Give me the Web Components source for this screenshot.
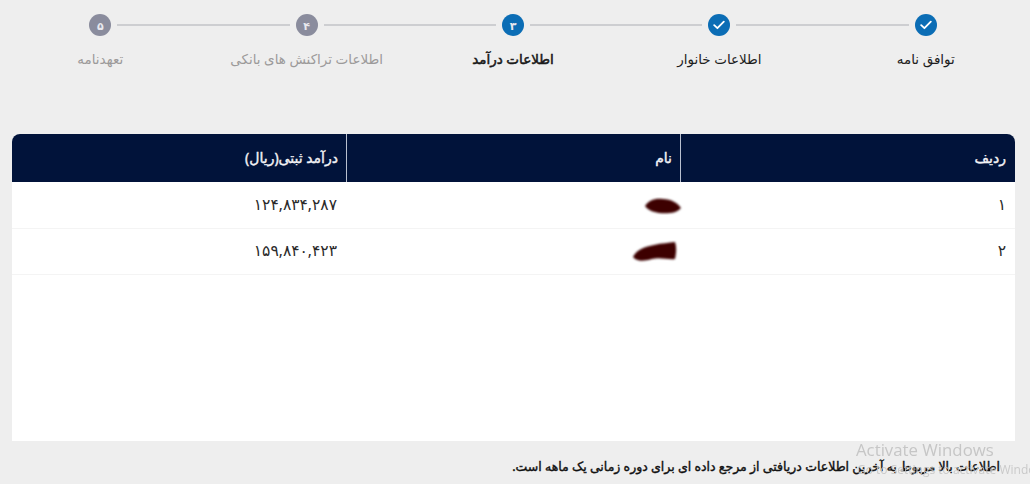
<!DOCTYPE html>
<html lang="fa" dir="rtl">
<head>
<meta charset="utf-8">
<title>اطلاعات درآمد</title>
<style>
    html, body { margin: 0; height: 100%; }
    body {
        background: #eeeeee;
        font-family: "Noto Sans", "DejaVu Sans", sans-serif;
        overflow: hidden;
    }
</style>
</head>
<body>
<step-bar>
    <step-item state="done" label="توافق نامه" first></step-item>
    <step-item state="done" label="اطلاعات خانوار"></step-item>
    <step-item state="active" label="اطلاعات درآمد" num="۳"></step-item>
    <step-item label="اطلاعات تراکنش های بانکی" num="۴"></step-item>
    <step-item label="تعهدنامه" num="۵" last></step-item>
</step-bar>

<income-table>
    <income-row>
        <span>۱</span>
        <redaction-mark shape="a"></redaction-mark>
        <span>۱۲۴,۸۳۴,۲۸۷</span>
    </income-row>
    <income-row>
        <span>۲</span>
        <redaction-mark shape="b"></redaction-mark>
        <span>۱۵۹,۸۴۰,۴۲۳</span>
    </income-row>
</income-table>

<page-note>اطلاعات بالا مربوط به آخرین اطلاعات دریافتی از مرجع داده ای برای دوره زمانی یک ماهه است.</page-note>
<activation-mark></activation-mark>

<script>
class StepBar extends HTMLElement {
    constructor() {
        super();
        this.attachShadow({ mode: "open" });
        this.shadowRoot.innerHTML = `
            <style>
                :host {
                    display: flex;
                    height: 134px;
                    padding: 14px 1px 0 0;
                    box-sizing: border-box;
                }
            </style>
            <slot></slot>
        `;
    }
}
customElements.define("step-bar", StepBar);

class StepItem extends HTMLElement {
    constructor() {
        super();
        this.attachShadow({ mode: "open" });
    }

    connectedCallback() {
        const state = this.getAttribute("state") || "todo";
        const mark = state === "done"
            ? `<svg width="12" height="10" viewBox="0 0 12 10"><path d="M1.2 5.2 4.4 8.2 10.8 1.6" fill="none" stroke="#fff" stroke-width="1.8" stroke-linecap="round" stroke-linejoin="round"/></svg>`
            : this.getAttribute("num");
        this.shadowRoot.innerHTML = `
            <style>
                :host {
                    display: flex;
                    flex-direction: column;
                    align-items: center;
                    flex: 0 0 206.4px;
                }
                .rail {
                    display: flex;
                    align-items: center;
                    width: 100%;
                    height: 22px;
                }
                .line {
                    flex: 1;
                    height: 2px;
                    background: #cdced1;
                }
                .line.before { margin-left: 6px; }
                .line.after { margin-right: 6px; }
                .line.off { visibility: hidden; }
                .dot {
                    width: 22px;
                    height: 22px;
                    border-radius: 50%;
                    display: flex;
                    align-items: center;
                    justify-content: center;
                    color: #e8e8ee;
                    font-size: 11px;
                    font-weight: 700;
                    background: ${state === "todo" ? "#8a8c9d" : "#0b6db5"};
                }
                .label {
                    margin-top: 12px;
                    font-size: 13.5px;
                    line-height: 22px;
                    white-space: nowrap;
                    color: ${state === "todo" ? "#9c9a9a" : "#1d1d1d"};
                    -webkit-text-stroke: ${state === "active" ? ".5px #111" : "0"};
                }
            </style>
            <div class="rail">
                <div class="line before ${this.hasAttribute("first") ? "off" : ""}"></div>
                <div class="dot">${mark}</div>
                <div class="line after ${this.hasAttribute("last") ? "off" : ""}"></div>
            </div>
            <div class="label">${this.getAttribute("label")}</div>
        `;
    }
}
customElements.define("step-item", StepItem);

class IncomeTable extends HTMLElement {
    constructor() {
        super();
        this.attachShadow({ mode: "open" });
        this.shadowRoot.innerHTML = `
            <style>
                :host {
                    display: block;
                    margin-right: 15px;
                    width: 1003px;
                    height: 307px;
                    background: #fff;
                    border-radius: 8px 8px 0 0;
                    overflow: hidden;
                }
                .head {
                    display: grid;
                    grid-template-columns: 335px 334px 334px;
                    height: 48px;
                    margin-bottom: 1px;
                    background: #01133a;
                    color: #f2f2f5;
                    font-size: 14px;
                    -webkit-text-stroke: .4px #f2f2f5;
                    align-items: stretch;
                }
                .head div {
                    display: flex;
                    align-items: center;
                    padding: 0 9px 2px 0;
                }
                .head div + div {
                    border-right: 1px solid #b9c0cf;
                    margin-right: -1px;
                    padding-right: 8px;
                }
            </style>
            <div class="head">
                <div>ردیف</div>
                <div>نام</div>
                <div>درآمد ثبتی(ریال)</div>
            </div>
            <slot></slot>
        `;
    }
}
customElements.define("income-table", IncomeTable);

class IncomeRow extends HTMLElement {
    constructor() {
        super();
        this.attachShadow({ mode: "open" });
        this.shadowRoot.innerHTML = `
            <style>
                :host {
                    display: grid;
                    grid-template-columns: 335px 334px 334px;
                    height: 46px;
                    box-sizing: border-box;
                    padding-bottom: 4px;
                    border-bottom: 1px solid #f4f4f4;
                    align-items: center;
                    color: #2a2a2a;
                    font-size: 15.5px;
                }
                ::slotted(*) { padding-right: 9px; }
                ::slotted(redaction-mark) { padding-right: 0; }
            </style>
            <slot></slot>
        `;
    }
}
customElements.define("income-row", IncomeRow);

class RedactionMark extends HTMLElement {
    constructor() {
        super();
        this.attachShadow({ mode: "open" });
    }

    connectedCallback() {
        const shapes = {
            a: { w: 40, h: 22, lift: 2, d: "M5 11C9 5 15 3 23 4C31 4 38 8 41 13C37 18 28 19 19 18C13 17 8 15 5 11Z" },
            b: { w: 50, h: 26, lift: 0, d: "M3 20C7 12 15 10 24 8C32 6 39 6 45 5C47 11 46 17 45 22C38 23 30 20 22 22C14 24 7 25 3 20Z" }
        };
        const s = shapes[this.getAttribute("shape")];
        this.shadowRoot.innerHTML = `
            <style>
                :host { display: flex; justify-content: flex-start; }
                svg { display: block; overflow: visible; transform: translateY(${s.lift}px); }
            </style>
            <svg width="${s.w}" height="${s.h}" viewBox="0 0 ${s.w} ${s.h}">
                <filter id="soft"><feGaussianBlur stdDeviation="0.9"/></filter>
                <path d="${s.d}" fill="#3d0103" filter="url(#soft)"/>
            </svg>
        `;
    }
}
customElements.define("redaction-mark", RedactionMark);

class PageNote extends HTMLElement {
    constructor() {
        super();
        this.attachShadow({ mode: "open" });
        this.shadowRoot.innerHTML = `
            <style>
                :host {
                    display: block;
                    padding: 16px 30px 0 0;
                    font-size: 12.5px;
                    line-height: 20px;
                    -webkit-text-stroke: .4px #111;
                    color: #111;
                    white-space: nowrap;
                }
            </style>
            <slot></slot>
        `;
    }
}
customElements.define("page-note", PageNote);

class ActivationMark extends HTMLElement {
    constructor() {
        super();
        this.attachShadow({ mode: "open" });
        this.shadowRoot.innerHTML = `
            <style>
                :host {
                    position: fixed;
                    left: 856px;
                    top: 439px;
                    direction: ltr;
                    white-space: nowrap;
                    font-family: "Open Sans", "Liberation Sans", sans-serif;
                    color: #c6c6c6;
                    pointer-events: none;
                }
                .big { font-size: 16.8px; line-height: 22px; }
                .small { font-size: 12px; line-height: 18px; margin-left: 1px; opacity: .9; }
            </style>
            <div class="big">Activate Windows</div>
            <div class="small">Go to Settings to activate Windows.</div>
        `;
    }
}
customElements.define("activation-mark", ActivationMark);
</script>
</body>
</html>
